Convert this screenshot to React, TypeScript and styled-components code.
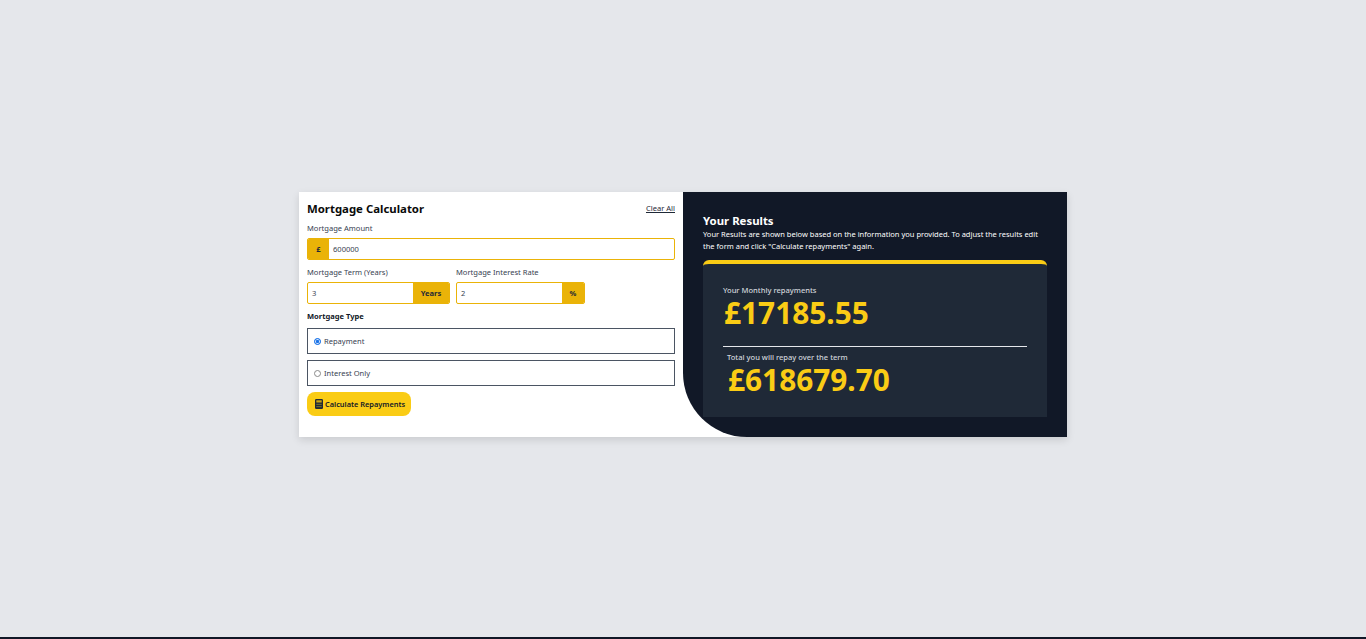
import React from "react";
import styled, { createGlobalStyle } from "styled-components";

const Global = createGlobalStyle`
  html, body { margin: 0; padding: 0; }
  body { font-family: "Noto Sans", "Open Sans", "Liberation Sans", sans-serif; background: #e5e7eb; }
  * { box-sizing: border-box; }
`;

const Page = styled.div`
  height: 639px;
  border-bottom: 2px solid #111827;
  padding-bottom: 8px;
  display: flex;
  align-items: center;
  justify-content: center;
  overflow: hidden;
`;
const Card = styled.main`
  width: 768px;
  height: 245px;
  display: grid;
  grid-template-columns: 384px 384px;
  background: #fff;
  box-shadow: 0 3px 8px rgba(0, 0, 0, 0.12);
`;
const FormPanel = styled.form`
  padding: 8px;
  display: flex;
  flex-direction: column;
`;
const Header = styled.div`
  display: flex;
  justify-content: space-between;
  align-items: center;
  height: 18px;
`;
const Title = styled.h1`
  margin: 0;
  font-size: 11.4px;
  line-height: 18px;
  font-weight: 700;
  color: #0a0a0a;
`;
const Clear = styled.a`
  font-size: 7.55px;
  line-height: 12px;
  margin-top: -2px;
  color: #1f2937;
  text-decoration: underline;
`;
const Label = styled.label`
  display: block;
  font-size: 7.55px;
  line-height: 12px;
  color: #374151;
`;
const TopField = styled.div`
  margin-top: 4px;
`;
const InputGroup = styled.div<{ $w?: number }>`
  display: flex;
  height: 22px;
  width: ${(p) => (p.$w ? `${p.$w}px` : "100%")};
  margin-top: 4px;
  border: 1px solid #eab308;
  border-radius: 2px;
  overflow: hidden;
  background: #fff;
`;
const Addon = styled.span<{ $w: number }>`
  flex: 0 0 ${(p) => p.$w}px;
  display: flex;
  align-items: center;
  justify-content: center;
  background: #eab308;
  color: #1f2937;
  font-size: 7.55px;
  font-weight: 700;
`;
const Value = styled.span`
  flex: 1;
  display: flex;
  align-items: center;
  padding-left: 4px;
  font-size: 7.55px;
  color: #374151;
`;
const Row = styled.div`
  display: flex;
  gap: 6px;
  margin-top: 6px;
`;
const TypeLabel = styled.div`
  margin-top: 6px;
  font-size: 7.55px;
  line-height: 12px;
  font-weight: 700;
  color: #111827;
`;
const RadioBox = styled.div`
  display: flex;
  align-items: center;
  gap: 3px;
  height: 26px;
  margin-top: 6px;
  padding-left: 6px;
  border: 1px solid #4b5563;
  font-size: 7.55px;
  color: #374151;
`;
const Dot = styled.span<{ $on?: boolean }>`
  width: 7px;
  height: 7px;
  border-radius: 50%;
  background: ${(p) => (p.$on ? "#1a73e8" : "#fff")};
  border: 1px solid ${(p) => (p.$on ? "#1a73e8" : "#8a8a8a")};
  ${(p) => p.$on && "box-shadow: inset 0 0 0 0.7px #fff;"}
`;
const Button = styled.button`
  margin-top: 6px;
  width: 104px;
  height: 24px;
  display: flex;
  align-items: center;
  gap: 2px;
  padding: 0 0 0 8px;
  border: none;
  border-radius: 8px;
  background: #facc15;
  color: #111827;
  font-family: inherit;
  font-size: 7.4px;
  font-weight: 600;
  white-space: nowrap;
`;
const ResultsPanel = styled.section`
  background: #111827;
  border-bottom-left-radius: 64px;
  padding: 21px 20px 20px 20px;
  display: flex;
  flex-direction: column;
  color: #fff;
`;
const ResultsTitle = styled.h2`
  margin: 0;
  font-size: 11.4px;
  line-height: 16px;
  font-weight: 700;
`;
const Desc = styled.p`
  margin: 0;
  font-size: 7.5px;
  line-height: 11.5px;
  color: #ffffff;
`;
const ResultCard = styled.div`
  margin-top: 8px;
  flex: 1;
  background: #1f2937;
  border-top: 4px solid #facc15;
  border-radius: 6px 6px 0 0;
  padding: 20px 20px 0;
`;
const Small = styled.div<{ $indent?: number }>`
  font-size: 7.55px;
  line-height: 12px;
  font-weight: 500;
  color: #d1d5db;
  padding-left: ${(p) => p.$indent ?? 0}px;
`;
const Amount = styled.div<{ $indent?: number }>`
  font-size: 29.8px;
  line-height: 34px;
  font-weight: 700;
  color: #facc15;
  padding-left: ${(p) => p.$indent ?? 0}px;
`;
const Divider = styled.hr`
  margin: 16px 0 4px;
  border: none;
  border-top: 1px solid #e5e7eb;
`;

const CalcIcon = () => (
  <svg width="8" height="10" viewBox="0 0 8 10" aria-hidden>
    <rect width="8" height="10" rx="1.2" fill="#1f2937" />
    <rect x="1.3" y="1.3" width="5.4" height="2.2" fill="#c9a514" />
    <rect x="1.3" y="4.8" width="5.4" height="1.2" fill="#6b6a2a" />
    <rect x="1.3" y="7" width="5.4" height="1.2" fill="#6b6a2a" />
  </svg>
);

export default function App() {
  return (
    <>
      <Global />
      <Page>
        <Card>
          <FormPanel>
            <Header>
              <Title>Mortgage Calculator</Title>
              <Clear>Clear All</Clear>
            </Header>
            <TopField>
              <Label>Mortgage Amount</Label>
              <InputGroup>
                <Addon $w={21}>£</Addon>
                <Value>600000</Value>
              </InputGroup>
            </TopField>
            <Row>
              <div>
                <Label>Mortgage Term (Years)</Label>
                <InputGroup $w={143}>
                  <Value>3</Value>
                  <Addon $w={36}>Years</Addon>
                </InputGroup>
              </div>
              <div>
                <Label>Mortgage Interest Rate</Label>
                <InputGroup $w={129}>
                  <Value>2</Value>
                  <Addon $w={22}>%</Addon>
                </InputGroup>
              </div>
            </Row>
            <TypeLabel>Mortgage Type</TypeLabel>
            <RadioBox>
              <Dot $on />
              Repayment
            </RadioBox>
            <RadioBox>
              <Dot />
              Interest Only
            </RadioBox>
            <Button type="button">
              <CalcIcon />
              Calculate Repayments
            </Button>
          </FormPanel>
          <ResultsPanel>
            <ResultsTitle>Your Results</ResultsTitle>
            <Desc>
              Your Results are shown below based on the information you provided. To adjust the results edit the form and click "Calculate repayments" again.
            </Desc>
            <ResultCard>
              <Small>Your Monthly repayments</Small>
              <Amount $indent={1}>£17185.55</Amount>
              <Divider />
              <Small $indent={4}>Total you will repay over the term</Small>
              <Amount $indent={5}>£618679.70</Amount>
            </ResultCard>
          </ResultsPanel>
        </Card>
      </Page>
    </>
  );
}
